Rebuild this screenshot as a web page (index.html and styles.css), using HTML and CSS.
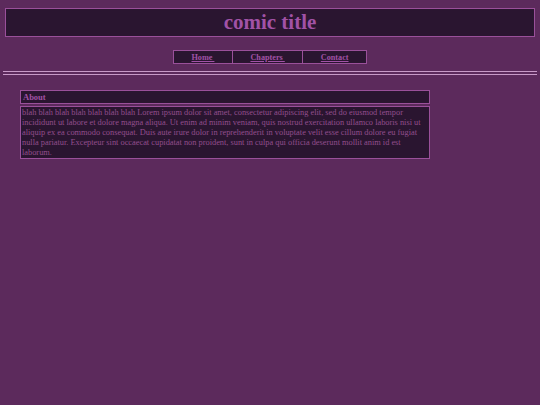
FILE: index.html
```
<!DOCTYPE html>
<html lang="en">
<head>
<meta charset="utf-8">
<title>comic title</title>
<link rel="stylesheet" href="styles.css">
</head>
<body>
  <header class="banner">
    <h1 class="banner-title">comic title</h1>
  </header>

  <nav class="nav">
    <a class="nav-link" href="#">Home </a>
    <a class="nav-link" href="#">Chapters </a>
    <a class="nav-link" href="#">Contact</a>
  </nav>

  <hr class="divider">

  <section class="panel">
    <h2 class="panel-head">About</h2>
    <p class="panel-body">blah blah blah blah blah blah blah Lorem ipsum dolor sit amet, consectetur adipiscing elit, sed do eiusmod tempor incididunt ut labore et dolore magna aliqua. Ut enim ad minim veniam, quis nostrud exercitation ullamco laboris nisi ut aliquip ex ea commodo consequat. Duis aute irure dolor in reprehenderit in voluptate velit esse cillum dolore eu fugiat nulla pariatur. Excepteur sint occaecat cupidatat non proident, sunt in culpa qui officia deserunt mollit anim id est laborum.</p>
  </section>
</body>
</html>
```
FILE: styles.css
```
html, body {
  margin: 0;
  padding: 0;
  background: #5c2a5c;
  font-family: "Liberation Serif", "Times New Roman", serif;
  color: #9a55a0;
}

body {
  padding-top: 8px;
}

.banner {
  margin: 0 5px;
  background: #2a1530;
  border: 1px solid #9a509a;
  height: 27px;
  display: flex;
  align-items: center;
  justify-content: center;
}

.banner-title {
  margin: 0;
  font-size: 21px;
  font-weight: bold;
  line-height: 1;
  color: #a152a6;
}

.nav {
  display: flex;
  justify-content: center;
  margin-top: 13px;
}

.nav-link {
  display: block;
  background: #2a1530;
  border: 1px solid #9a509a;
  padding: 0 17.5px;
  height: 12px;
  line-height: 13px;
  font-size: 8.2px;
  font-weight: bold;
  color: #a152a6;
  white-space: pre;
  text-decoration: underline;
}

.nav-link + .nav-link {
  margin-left: -1px;
}

.divider {
  margin: 7px 3px 0;
  height: 2px;
  border: 0;
  border-top: 1px solid #c89ac8;
  border-bottom: 1px solid #c89ac8;
  background: transparent;
}

.panel {
  width: 410px;
  margin: 15px 0 0 20px;
}

.panel-head {
  margin: 0;
  height: 12px;
  line-height: 13px;
  padding: 0 2px;
  background: #2a1530;
  border: 1px solid #9a509a;
  font-size: 8.5px;
  font-weight: bold;
  color: #a152a6;
}

.panel-body {
  margin: 2px 0 0;
  padding: 1px 1px 0;
  background: #2a1530;
  border: 1px solid #9a509a;
  font-size: 8.35px;
  line-height: 10px;
  color: #934e8e;
}
```
